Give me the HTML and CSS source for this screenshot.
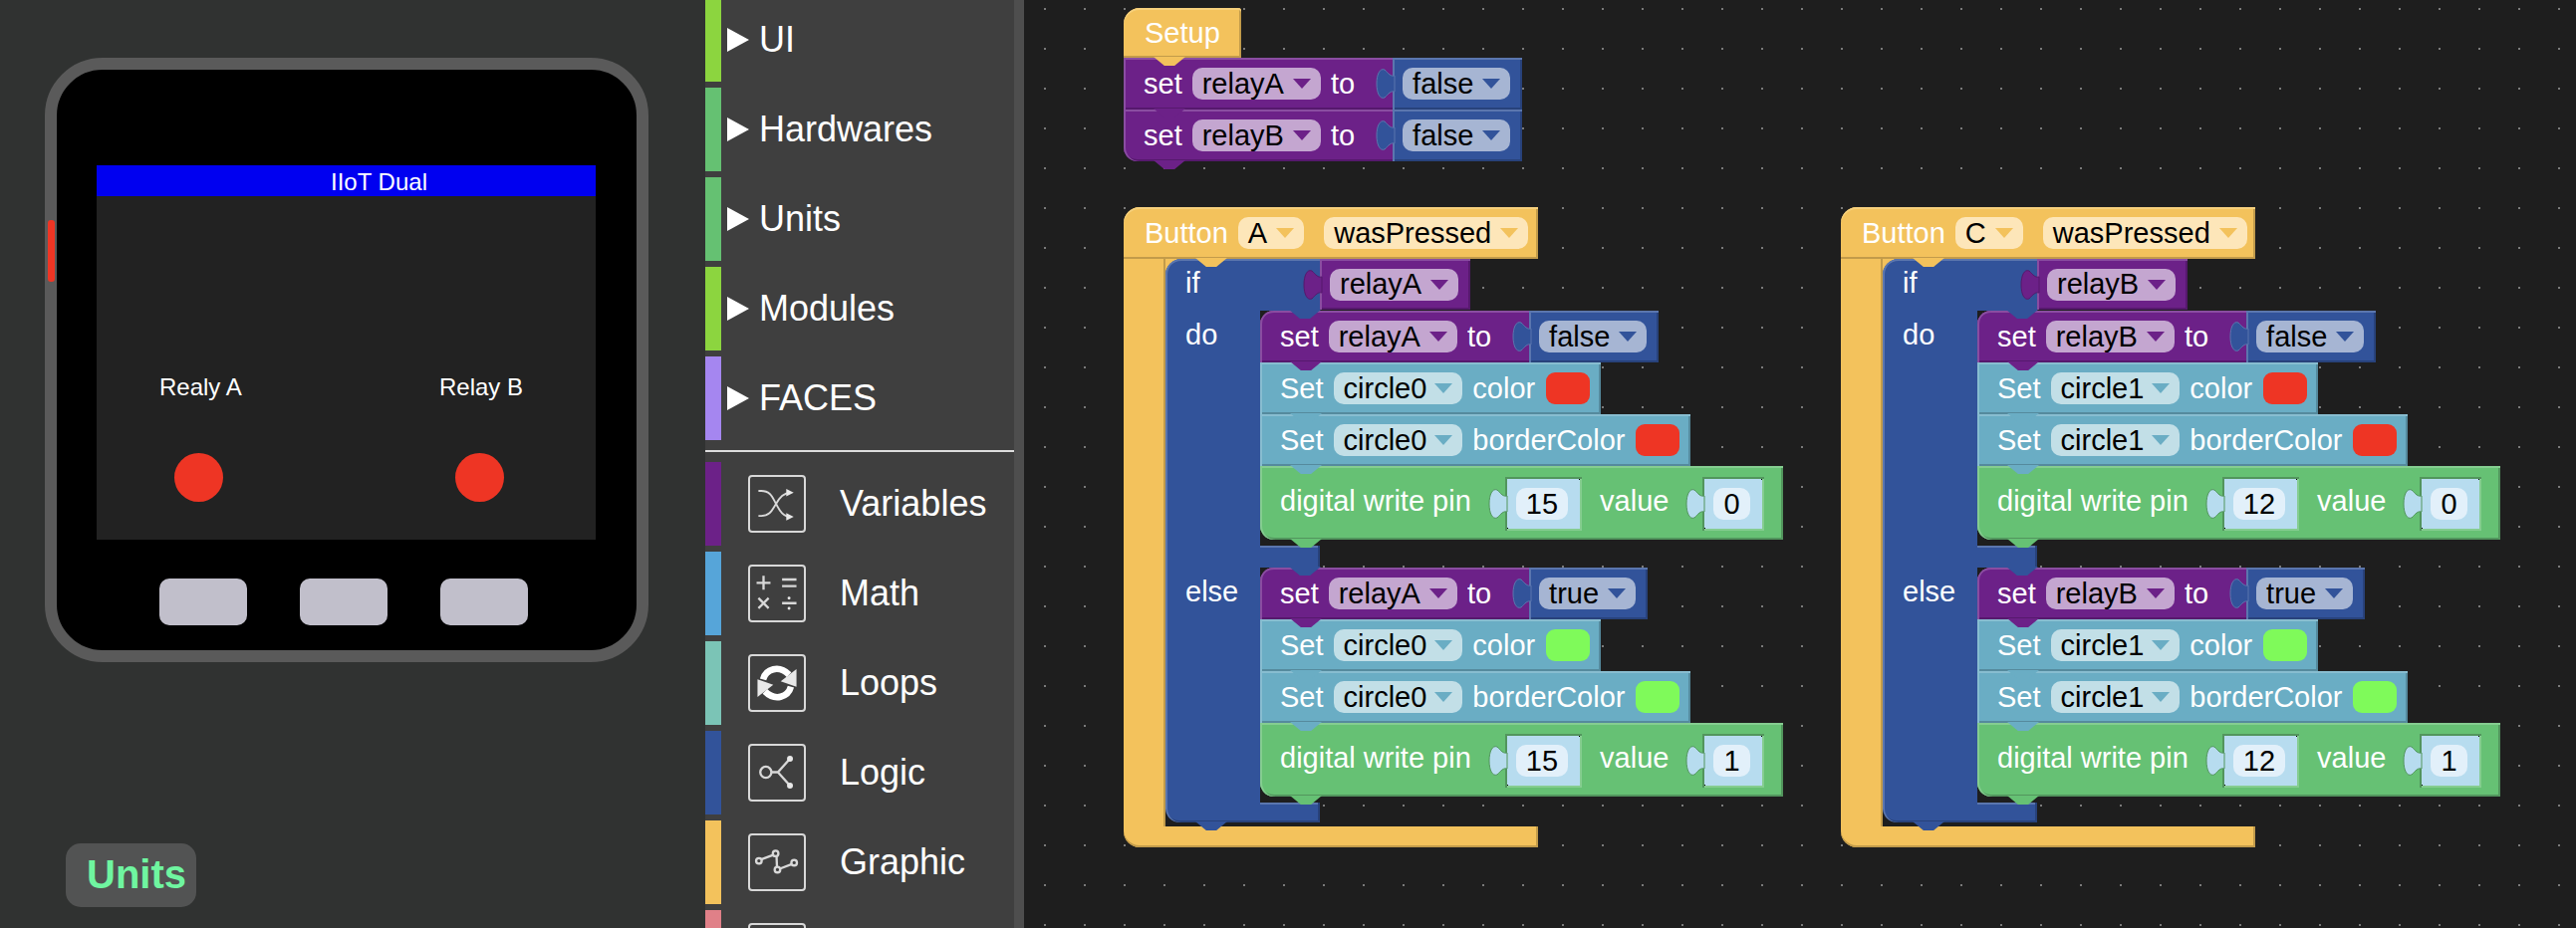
FILE: index.html
```html
<!DOCTYPE html>
<html lang="en">
  <head>
    <title>UIFlow</title>
    <link rel="stylesheet" href="styles.css">
  </head>

  <body>
    <svg class="defs" width="0" height="0">
      <symbol id="tab" viewBox="0 0 18 30" overflow="visible">
        <path d="M18 7 C14 8 12 5 8 1 C3 -1 0 6 0 15 C0 24 3 31 8 29 C12 25 14 22 18 23 Z" />
      </symbol>
    </svg>

    <!-- simulator -->
    <div class="sim-panel">
      <div class="device">
        <div class="side-light"></div>
        <div class="screen">
          <div class="title-bar">IIoT Dual</div>
          <span class="screen-label label-a">Realy A</span>
          <span class="screen-label label-b">Relay B</span>
          <span class="led led-a"></span>
          <span class="led led-b"></span>
        </div>
        <div class="hw-buttons">
          <div class="hw-button"></div>
          <div class="hw-button"></div>
          <div class="hw-button"></div>
        </div>
      </div>
      <div class="units-badge">Units</div>
    </div>

    <!-- toolbox -->
    <div class="toolbox">
      <div class="tool-row tool-first"><span class="strip lime"></span><span class="arrow"></span><span class="tool-name">UI</span></div>
      <div class="tool-row"><span class="strip mint"></span><span class="arrow"></span><span class="tool-name">Hardwares</span></div>
      <div class="tool-row"><span class="strip mint"></span><span class="arrow"></span><span class="tool-name">Units</span></div>
      <div class="tool-row"><span class="strip lime"></span><span class="arrow"></span><span class="tool-name">Modules</span></div>
      <div class="tool-row"><span class="strip lilac"></span><span class="arrow"></span><span class="tool-name">FACES</span></div>
      <div class="tool-sep"></div>
      <div class="tool-row">
        <span class="strip c-variables"></span>
        <svg class="tool-icon" viewBox="0 0 58 58">
          <path class="line" d="M9 15 H12 C22 15 24 22 28 29 C32 37 36 43 44 43" />
          <path class="line" d="M9 42 H12 C22 42 24 35 28 29 C32 22 36 17 44 17" />
          <path class="solid" d="M47 17 L39 13 V21 Z M47 43 L39 39 V47 Z" />
        </svg>
        <span class="tool-name">Variables</span>
      </div>
      <div class="tool-row">
        <span class="strip c-math"></span>
        <svg class="tool-icon" viewBox="0 0 58 58">
          <path class="line thick" d="M7 17.5 H22 M14.5 10 V25 M34.500 14 H50 M34.500 21 H50 M9 34 L20 45 M20 34 L9 45 M34.500 39.500 H50" />
          <circle class="solid" cx="42" cy="34" r="1.600" />
          <circle class="solid" cx="42" cy="45" r="1.600" />
        </svg>
        <span class="tool-name">Math</span>
      </div>
      <div class="tool-row">
        <span class="strip c-loops"></span>
        <svg class="tool-icon" viewBox="0 0 58 58">
          <g>
            <path class="line heavy" d="M14 25 C17 14 31 9 42 20" />
            <path class="solid" d="M50 14 V33 L33 27 Z" />
          </g>
          <g transform="rotate(180 29 29)">
            <path class="line heavy" d="M14 25 C17 14 31 9 42 20" />
            <path class="solid" d="M50 14 V33 L33 27 Z" />
          </g>
        </svg>
        <span class="tool-name">Loops</span>
      </div>
      <div class="tool-row">
        <span class="strip c-logic"></span>
        <svg class="tool-icon" viewBox="0 0 58 58">
          <circle class="line thick" cx="17" cy="28.500" r="6" />
          <path class="line thick" d="M23 28.500 H30 L43 14 M30 28.500 L43 43" />
          <circle class="solid" cx="43" cy="14" r="3.200" />
          <circle class="solid" cx="43" cy="43" r="3.200" />
        </svg>
        <span class="tool-name">Logic</span>
      </div>
      <div class="tool-row">
        <span class="strip c-graphic"></span>
        <svg class="tool-icon" viewBox="0 0 58 58">
          <path class="line thick" d="M12 26 L25 21 M28.500 22 L29 34 M32 36 L45 31" />
          <circle class="line thick" cx="9.500" cy="27.500" r="3" />
          <circle class="line thick" cx="27.500" cy="19.500" r="3" />
          <circle class="line thick" cx="29.500" cy="37" r="3" />
          <circle class="line thick" cx="47.500" cy="29.500" r="3" />
        </svg>
        <span class="tool-name">Graphic</span>
      </div>
      <div class="tool-row">
        <span class="strip c-last"></span>
        <svg class="tool-icon" viewBox="0 0 58 58"></svg>
      </div>
    </div>

    <!-- blocks -->
    <div class="workspace">

      <div class="group group-setup">
        <div class="hat-head setup-head yellow"><span>Setup</span></div>
        <div class="block purple has-value">
          <span>set</span>
          <span class="field f-purple">relayA<i class="tri"></i></span>
          <span>to</span>
          <span class="value blue"><svg class="tab"><use href="#tab" /></svg><span class="field f-blue">false<i class="tri"></i></span></span>
        </div>
        <div class="block purple has-value last">
          <span>set</span>
          <span class="field f-purple">relayB<i class="tri"></i></span>
          <span>to</span>
          <span class="value blue"><svg class="tab"><use href="#tab" /></svg><span class="field f-blue">false<i class="tri"></i></span></span>
        </div>
      </div>

      <div class="group group-a">
        <div class="hat-head button-head yellow">
          <span>Button</span>
          <span class="field f-yellow">A<i class="tri"></i></span>
          <span class="field f-yellow event">wasPressed<i class="tri"></i></span>
        </div>
        <div class="hat-body">
          <div class="hat-rail"></div>
          <div class="hat-stack">
            <div class="if-block">
              <div class="if-row">
                <div class="if-left"><span class="if-label">if</span></div>
                <span class="value purple"><svg class="tab"><use href="#tab" /></svg><span class="field f-purple">relayA<i class="tri"></i></span></span>
              </div>
              <div class="do-row">
                <div class="rail">do</div>
                <div class="stack">
                  <div class="block purple has-value first">
                    <span>set</span>
                    <span class="field f-purple">relayA<i class="tri"></i></span>
                    <span>to</span>
                    <span class="value blue"><svg class="tab"><use href="#tab" /></svg><span class="field f-blue">false<i class="tri"></i></span></span>
                  </div>
                  <div class="block teal">
                    <span>Set</span>
                    <span class="field f-teal">circle0<i class="tri"></i></span>
                    <span>color</span>
                    <span class="swatch red"></span>
                  </div>
                  <div class="block teal">
                    <span>Set</span>
                    <span class="field f-teal">circle0<i class="tri"></i></span>
                    <span>borderColor</span>
                    <span class="swatch red"></span>
                  </div>
                  <div class="block green tall last">
                    <span class="pin-text">digital write pin</span>
                    <span class="pin"><svg class="tab"><use href="#tab" /></svg><span class="num">15</span></span>
                    <span class="pin-text">value</span>
                    <span class="pin"><svg class="tab"><use href="#tab" /></svg><span class="num">0</span></span>
                  </div>
                </div>
              </div>
              <div class="spacer"></div>
              <div class="do-row">
                <div class="rail">else</div>
                <div class="stack">
                  <div class="block purple has-value first">
                    <span>set</span>
                    <span class="field f-purple">relayA<i class="tri"></i></span>
                    <span>to</span>
                    <span class="value blue"><svg class="tab"><use href="#tab" /></svg><span class="field f-blue">true<i class="tri"></i></span></span>
                  </div>
                  <div class="block teal">
                    <span>Set</span>
                    <span class="field f-teal">circle0<i class="tri"></i></span>
                    <span>color</span>
                    <span class="swatch lime-swatch"></span>
                  </div>
                  <div class="block teal">
                    <span>Set</span>
                    <span class="field f-teal">circle0<i class="tri"></i></span>
                    <span>borderColor</span>
                    <span class="swatch lime-swatch"></span>
                  </div>
                  <div class="block green tall last">
                    <span class="pin-text">digital write pin</span>
                    <span class="pin"><svg class="tab"><use href="#tab" /></svg><span class="num">15</span></span>
                    <span class="pin-text">value</span>
                    <span class="pin"><svg class="tab"><use href="#tab" /></svg><span class="num">1</span></span>
                  </div>
                </div>
              </div>
              <div class="if-foot"></div>
            </div>
          </div>
        </div>
        <div class="hat-foot"></div>
      </div>

      <div class="group group-c">
        <div class="hat-head button-head yellow">
          <span>Button</span>
          <span class="field f-yellow">C<i class="tri"></i></span>
          <span class="field f-yellow event">wasPressed<i class="tri"></i></span>
        </div>
        <div class="hat-body">
          <div class="hat-rail"></div>
          <div class="hat-stack">
            <div class="if-block">
              <div class="if-row">
                <div class="if-left"><span class="if-label">if</span></div>
                <span class="value purple"><svg class="tab"><use href="#tab" /></svg><span class="field f-purple">relayB<i class="tri"></i></span></span>
              </div>
              <div class="do-row">
                <div class="rail">do</div>
                <div class="stack">
                  <div class="block purple has-value first">
                    <span>set</span>
                    <span class="field f-purple">relayB<i class="tri"></i></span>
                    <span>to</span>
                    <span class="value blue"><svg class="tab"><use href="#tab" /></svg><span class="field f-blue">false<i class="tri"></i></span></span>
                  </div>
                  <div class="block teal">
                    <span>Set</span>
                    <span class="field f-teal">circle1<i class="tri"></i></span>
                    <span>color</span>
                    <span class="swatch red"></span>
                  </div>
                  <div class="block teal">
                    <span>Set</span>
                    <span class="field f-teal">circle1<i class="tri"></i></span>
                    <span>borderColor</span>
                    <span class="swatch red"></span>
                  </div>
                  <div class="block green tall last">
                    <span class="pin-text">digital write pin</span>
                    <span class="pin"><svg class="tab"><use href="#tab" /></svg><span class="num">12</span></span>
                    <span class="pin-text">value</span>
                    <span class="pin"><svg class="tab"><use href="#tab" /></svg><span class="num">0</span></span>
                  </div>
                </div>
              </div>
              <div class="spacer"></div>
              <div class="do-row">
                <div class="rail">else</div>
                <div class="stack">
                  <div class="block purple has-value first">
                    <span>set</span>
                    <span class="field f-purple">relayB<i class="tri"></i></span>
                    <span>to</span>
                    <span class="value blue"><svg class="tab"><use href="#tab" /></svg><span class="field f-blue">true<i class="tri"></i></span></span>
                  </div>
                  <div class="block teal">
                    <span>Set</span>
                    <span class="field f-teal">circle1<i class="tri"></i></span>
                    <span>color</span>
                    <span class="swatch lime-swatch"></span>
                  </div>
                  <div class="block teal">
                    <span>Set</span>
                    <span class="field f-teal">circle1<i class="tri"></i></span>
                    <span>borderColor</span>
                    <span class="swatch lime-swatch"></span>
                  </div>
                  <div class="block green tall last">
                    <span class="pin-text">digital write pin</span>
                    <span class="pin"><svg class="tab"><use href="#tab" /></svg><span class="num">12</span></span>
                    <span class="pin-text">value</span>
                    <span class="pin"><svg class="tab"><use href="#tab" /></svg><span class="num">1</span></span>
                  </div>
                </div>
              </div>
              <div class="if-foot"></div>
            </div>
          </div>
        </div>
        <div class="hat-foot"></div>
      </div>

    </div>
  </body>
</html>
```

FILE: styles.css
```css
*,
*:before,
*:after {
  box-sizing: border-box;
}

html,
body {
  height: 100%;
}

body {
  font-family: "Liberation Sans", Arial, sans-serif;
  margin: 0;
  display: flex;
  overflow: hidden;
  background-color: #303231;
  color: #fff;
}

.defs {
  position: absolute;
}

/* simulator */
.sim-panel {
  width: 708px;
  flex: none;
  padding: 58px 0 0 45px;
}

.device {
  position: relative;
  width: 606px;
  height: 607px;
  padding: 96px 0 0 40px;
  background-color: #000;
  border: 12px solid #5a5a5a;
  border-radius: 58px;
}

.side-light {
  position: absolute;
  left: -9px;
  top: 151px;
  width: 7px;
  height: 62px;
  border-radius: 3px;
  background-color: #ee3524;
}

.screen {
  position: relative;
  width: 501px;
  height: 376px;
  background-color: #222;
}

.title-bar {
  height: 31px;
  padding-left: 66px;
  background-color: #0000f0;
  font-size: 24px;
  line-height: 34px;
  text-align: center;
}

.screen-label {
  position: absolute;
  top: 209px;
  font-size: 24px;
  line-height: 28px;
  white-space: nowrap;
}

.label-a {
  left: 63px;
}

.label-b {
  left: 344px;
}

.led {
  position: absolute;
  top: 289px;
  width: 49px;
  height: 49px;
  border-radius: 50%;
  background-color: #ee3524;
}

.led-a {
  left: 78px;
}

.led-b {
  left: 360px;
}

.hw-buttons {
  display: flex;
  gap: 53px;
  margin: 39px 0 0 63px;
}

.hw-button {
  width: 88px;
  height: 47px;
  border-radius: 10px;
  background-color: #c1bfcb;
}

.units-badge {
  width: 131px;
  height: 64px;
  margin: 182px 0 0 21px;
  padding-left: 21px;
  border-radius: 15px;
  background-color: #525353;
  color: #6ff5a0;
  font-size: 40px;
  font-weight: bold;
  line-height: 62px;
}

/* toolbox */
.toolbox {
  width: 320px;
  flex: none;
  height: 100%;
  background-color: #3f3f3f;
  border-right: 10px solid #4e4e4e;
  overflow: hidden;
}

.tool-row {
  display: flex;
  align-items: center;
  height: 84px;
  margin-bottom: 6px;
}

.tool-first {
  margin-top: -2px;
}

.tool-sep {
  height: 2px;
  margin: 10px 0 10px;
  background-color: #ddd;
}

.strip {
  width: 16px;
  height: 100%;
  flex: none;
}

.lime { background-color: #8cd53f; }
.mint { background-color: #65c172; }
.lilac { background-color: #a586f0; }
.c-variables { background-color: #6c2188; }
.c-math { background-color: #56a5d9; }
.c-loops { background-color: #7bc4b6; }
.c-logic { background-color: #32539a; }
.c-graphic { background-color: #f3c25c; }
.c-last { background-color: #e08088; }

.arrow {
  width: 0;
  height: 0;
  margin: 0 11px 0 6px;
  border-style: solid;
  border-width: 12.500px 0 12.500px 22px;
  border-color: transparent transparent transparent #fff;
}

.tool-name {
  margin-left: -1px;
  font-size: 36px;
  white-space: nowrap;
}

.tool-icon {
  width: 58px;
  height: 58px;
  margin: 0 35px 0 27px;
  flex: none;
  border: 2px solid #d8d8d8;
  border-radius: 4px;
  overflow: visible;
}

.tool-icon .line {
  fill: none;
  stroke: #d8d8d8;
  stroke-width: 2;
}

.tool-icon .thick {
  stroke-width: 2.500;
}

.tool-icon .heavy {
  stroke: #fff;
  stroke-width: 7;
}

.tool-icon .solid {
  fill: #e8e8e8;
}

/* blocks */
.workspace {
  position: relative;
  flex: 1;
  background-color: #1e1e1e;
  background-image: radial-gradient(circle at 1px 1px, #7a7a7a 1px, transparent 1px);
  background-size: 40px 40px;
  background-position: 20px 8px;
  font-size: 29px;
  white-space: nowrap;
}

.group {
  position: absolute;
  left: 100px;
}

.group-setup {
  top: 8px;
}

.group-a,
.group-c {
  top: 208px;
}

.group-c {
  left: 820px;
}

.purple { --fill: #6c2188; --light: #8a4da1; --dark: #56196d; --edge: #56196d; }
.blue { --fill: #32539a; --light: #5b76ae; --dark: #28427b; --edge: #5b76ae; }
.teal { --fill: #6aadc4; --light: #88bdd0; --dark: #558a9d; }
.green { --fill: #66c174; --light: #85cd90; --dark: #52955d; }
.yellow { --fill: #f3c25c; --light: #f6d07d; --dark: #c29b4a; }

.block,
.value,
.hat-head {
  background-color: var(--fill);
  box-shadow: inset 0 2px 0 var(--light), inset 2px 0 0 var(--light), inset 0 -2px 0 var(--dark), inset -2px 0 0 var(--dark);
}

.block {
  position: relative;
  display: flex;
  align-items: center;
  gap: 10px;
  width: fit-content;
  height: 52px;
  padding: 0 11px 0 20px;
}

.block.has-value {
  padding-right: 0;
}

.block.first {
  border-top-left-radius: 14px;
}

.block.last {
  border-bottom-left-radius: 14px;
}

.block.tall {
  height: 74px;
  gap: 0;
  padding-right: 19px;
}

/* the bump at the bottom of a block */
.block:after,
.hat-head:after,
.if-left:after,
.spacer:after,
.if-foot:after {
  content: "";
  position: absolute;
  z-index: 2;
  top: 100%;
  left: 30px;
  width: 32px;
  height: 9px;
  margin-top: -1px;
  background-color: var(--fill);
  clip-path: polygon(0 0, 100% 0, 66% 100%, 34% 100%);
}

.value {
  position: relative;
  align-self: stretch;
  display: flex;
  align-items: center;
  margin-left: 28px;
  padding: 0 12px 0 10px;
}

.if-row .value {
  margin-left: 0;
  height: 51px;
}

.tab {
  position: absolute;
  left: -16px;
  top: 11px;
  width: 18px;
  height: 30px;
  fill: var(--fill);
  stroke: var(--edge);
  stroke-width: 1;
  overflow: visible;
}

.field {
  display: inline-flex;
  align-items: center;
  gap: 9px;
  height: 32px;
  padding: 0 10px;
  border-radius: 10px;
  color: #000;
}

.tri {
  width: 0;
  height: 0;
  border-style: solid;
  border-width: 10px 9px 0;
  border-color: var(--tri) transparent transparent;
}

.f-purple { background-color: #c4a6d0; --tri: #6c2188; }
.f-blue { background-color: #a6b5d3; --tri: #32539a; }
.f-teal { background-color: #c2dfe7; --tri: #6aadc4; gap: 8px; }
.f-yellow { background-color: #fde6b9; --tri: #f3c25c; }

.swatch {
  width: 44px;
  height: 32px;
  margin-left: 1px;
  border-radius: 9px;
}

.red { background-color: #ee3524; }
.lime-swatch { background-color: #7ffa5a; }

.pin-text {
  position: relative;
  top: -2px;
}

.pin {
  --fill: #b7dcef;
  --edge: #52955d;
  position: relative;
  display: flex;
  align-items: center;
  height: 54px;
  margin: 2px 18px 0 34px;
  padding: 0 14px 0 11px;
  background: linear-gradient(#000, #000) right 1px top 1px / 2px 2px no-repeat,
    linear-gradient(#000, #000) left 1px bottom 1px / 2px 2px no-repeat,
    #b7dcef;
  box-shadow: inset 0 2px 0 #52955d, inset 2px 0 0 #52955d, inset 0 -2px 0 #85cd90, inset -2px 0 0 #85cd90;
}

.pin:last-child {
  margin-right: 0;
}

.pin .tab {
  top: 12px;
}

.num {
  min-width: 36px;
  height: 32px;
  padding: 0 10px;
  border-radius: 10px;
  background-color: #e2f0fa;
  color: #000;
  line-height: 32px;
  text-align: center;
}

.hat-head {
  position: relative;
  display: flex;
  align-items: center;
  gap: 10px;
  height: 52px;
  padding-left: 21px;
  border-top-left-radius: 16px;
  box-shadow: inset 0 2px 0 var(--light), inset -2px 0 0 var(--dark), inset 0 -2px 0 var(--dark);
}

.setup-head {
  width: 118px;
  height: 50px;
  border-top-right-radius: 3px;
}

.button-head {
  width: 416px;
}

.button-head:after {
  left: 72px;
}

.event {
  margin-left: 10px;
}

.hat-body {
  display: flex;
}

.hat-rail {
  width: 42px;
  flex: none;
  background-color: #f3c25c;
  box-shadow: inset -2px 0 0 #c29b4a;
}

.hat-stack {
  padding-bottom: 4px;
}

.if-block {
  --fill: #32539a;
  --light: #5b76ae;
  --dark: #28427b;
  background: linear-gradient(#f3c25c, #f3c25c) 0 0 / 16px 16px no-repeat;
}

.if-row {
  display: flex;
  height: 52px;
}

.if-left {
  position: relative;
  width: 155px;
  flex: none;
  padding-left: 20px;
  background-color: var(--fill);
  border-top-left-radius: 16px;
  box-shadow: inset 0 2px 0 var(--light), inset 2px 0 0 var(--light);
  line-height: 48px;
}

.if-left:after,
.spacer:after {
  left: 124px;
}

.do-row {
  display: flex;
}

.rail {
  width: 95px;
  flex: none;
  padding-left: 20px;
  background-color: var(--fill);
  box-shadow: inset 2px 0 0 var(--light);
  line-height: 48px;
}

.stack {
  padding-bottom: 6px;
}

.spacer,
.if-foot {
  position: relative;
  width: 155px;
  background: linear-gradient(var(--light), var(--light)) right 0 top 0 / 60px 2px no-repeat, var(--fill);
  box-shadow: inset 2px 0 0 var(--light), inset -2px 0 0 var(--dark);
}

.spacer {
  height: 22px;
}

.if-foot {
  height: 20px;
  border-bottom-left-radius: 14px;
  box-shadow: inset 2px 0 0 var(--light), inset -2px 0 0 var(--dark), inset 0 -2px 0 var(--dark);
}

.hat-foot {
  width: 416px;
  height: 21px;
  background-color: #f3c25c;
  border-bottom-left-radius: 16px;
  box-shadow: inset -2px 0 0 #c29b4a, inset 0 -2px 0 #c29b4a;
}
```
